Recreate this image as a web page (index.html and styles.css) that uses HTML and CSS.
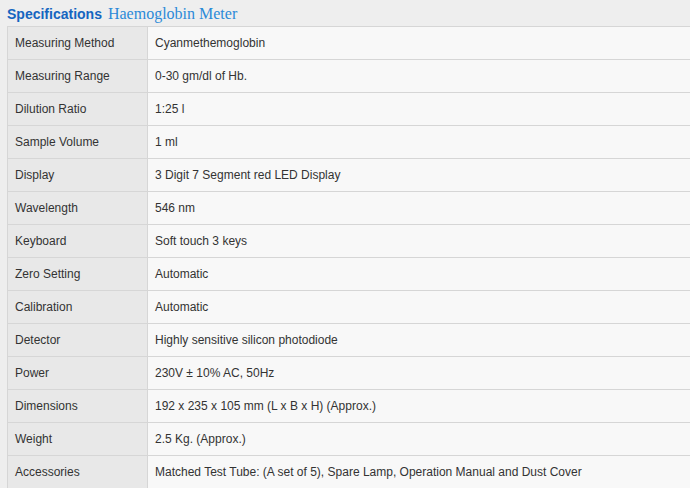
FILE: index.html
```html
<!DOCTYPE html>
<html>
<head>
<meta charset="utf-8">
<link rel="stylesheet" href="styles.css">
</head>
<body>
<div class="page">
  <h2 class="title"><span class="spec">Specifications</span> <span class="product">Haemoglobin Meter</span></h2>
  <table class="specs">
    <tr><td class="key">Measuring Method</td><td class="val">Cyanmethemoglobin</td></tr>
    <tr><td class="key">Measuring Range</td><td class="val">0-30 gm/dl of Hb.</td></tr>
    <tr><td class="key">Dilution Ratio</td><td class="val">1:25 l</td></tr>
    <tr><td class="key">Sample Volume</td><td class="val">1 ml</td></tr>
    <tr><td class="key">Display</td><td class="val">3 Digit 7 Segment red LED Display</td></tr>
    <tr><td class="key">Wavelength</td><td class="val">546 nm</td></tr>
    <tr><td class="key">Keyboard</td><td class="val">Soft touch 3 keys</td></tr>
    <tr><td class="key">Zero Setting</td><td class="val">Automatic</td></tr>
    <tr><td class="key">Calibration</td><td class="val">Automatic</td></tr>
    <tr><td class="key">Detector</td><td class="val">Highly sensitive silicon photodiode</td></tr>
    <tr><td class="key">Power</td><td class="val">230V ± 10% AC, 50Hz</td></tr>
    <tr><td class="key">Dimensions</td><td class="val">192 x 235 x 105 mm (L x B x H) (Approx.)</td></tr>
    <tr><td class="key">Weight</td><td class="val">2.5 Kg. (Approx.)</td></tr>
    <tr><td class="key">Accessories</td><td class="val">Matched Test Tube: (A set of 5), Spare Lamp, Operation Manual and Dust Cover</td></tr>
  </table>
</div>
</body>
</html>
```
FILE: styles.css
```css
html, body {
  margin: 0;
  padding: 0;
  background: #eeeeee;
  overflow: hidden;
}
.page {
  padding: 2px 0 0 7px;
}
.title {
  margin: 0;
  height: 24px;
  line-height: 18px;
  font-weight: normal;
  white-space: nowrap;
}
.spec {
  font-family: "Liberation Sans", Arial, sans-serif;
  font-weight: bold;
  font-size: 14px;
  color: #1565c0;
}
.product {
  font-family: "Liberation Serif", "Times New Roman", serif;
  font-size: 16px;
  color: #2b8ad8;
}
.specs {
  border-collapse: collapse;
  width: 683px;
  font-family: "Liberation Sans", Arial, sans-serif;
  font-size: 12px;
  color: #333333;
  border-top: 1px solid #d6d6d6;
  border-left: 1px solid #d6d6d6;
}
.specs td {
  height: 32px;
  padding: 0 0 0 7px;
  border-bottom: 1px solid #d6d6d6;
  vertical-align: middle;
}
.key {
  width: 132px;
  background: #e8e8e8;
  border-right: 1px solid #d6d6d6;
}
.val {
  background: #f8f8f8;
}
```
